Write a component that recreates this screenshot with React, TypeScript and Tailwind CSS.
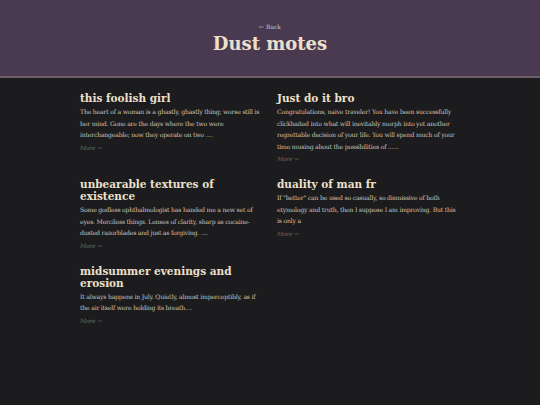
const posts = [
  {
    title: "this foolish girl",
    excerpt:
      "The heart of a woman is a ghastly, ghastly thing; worse still is her mind. Gone are the days where the two were interchangeable; now they operate on two ....",
  },
  {
    title: "Just do it bro",
    excerpt:
      "Congratulations, naive traveler! You have been successfully clickbaited into what will inevitably morph into yet another regrettable decision of your life. You will spend much of your time musing about the possibilities of ......",
  },
  {
    title: "unbearable textures of existence",
    excerpt:
      "Some godless ophthalmologist has handed me a new set of eyes. Merciless things. Lenses of clarity, sharp as cocaine-dusted razorblades and just as forgiving. ....",
  },
  {
    title: "duality of man fr",
    excerpt:
      'If "better" can be used so casually, so dismissive of both etymology and truth, then I suppose I am improving. But this is only a',
  },
  {
    title: "midsummer evenings and erosion",
    excerpt:
      "It always happens in July. Quietly, almost imperceptibly, as if the air itself were holding its breath....",
  },
];

function PostCard({ title, excerpt }: { title: string; excerpt: string }) {
  return (
    <article className="flex flex-col">
      <h2 className="text-[10.5px] font-bold leading-[12px] text-[#ece0cc]">{title}</h2>
      <p className="mt-[2px] text-[6.2px] leading-[11.5px] tracking-[-0.23px] text-[#cbc3b7]">{excerpt}</p>
      <a href="#" className="mt-[1px] text-[6px] leading-[12px] italic tracking-[-0.2px] text-[#6f6e62]">
        More →
      </a>
    </article>
  );
}

export default function App() {
  return (
    <div className="min-h-screen bg-[#1c1b1d] font-['DejaVu_Serif',serif]">
      <header className="flex h-[78px] flex-col items-center border-b-2 border-[#6d5f69] bg-[#4a3a51] pt-[23px]">
        <a href="#" className="text-[6px] leading-[8px] text-[#cfc3c4]">
          ← Back
        </a>
        <h1 className="mt-[2px] text-[18px] font-bold leading-[22px] text-[#ece0cc]">Dust motes</h1>
      </header>
      <main className="mx-auto grid w-[380px] grid-cols-[183px_183px] gap-x-[14px] gap-y-[13px] pt-[14px]">
        {posts.map((post) => (
          <PostCard key={post.title} {...post} />
        ))}
      </main>
    </div>
  );
}
